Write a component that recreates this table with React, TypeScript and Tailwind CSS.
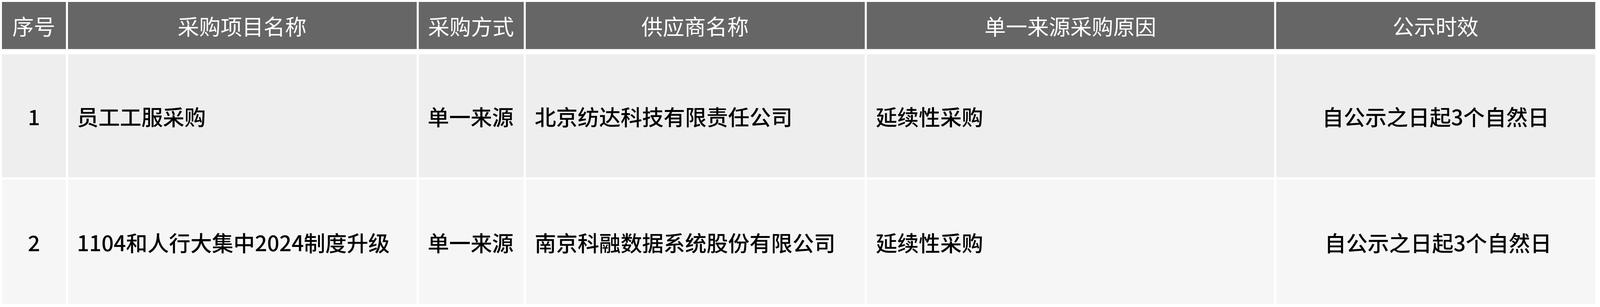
import React from "react";

const headers = ["序号", "采购项目名称", "采购方式", "供应商名称", "单一来源采购原因", "公示时效"];

const rows = [
  {
    no: "1",
    name: "员工工服采购",
    method: "单一来源",
    supplier: "北京纺达科技有限责任公司",
    reason: "延续性采购",
    period: "自公示之日起3个自然日",
    bg: "bg-[#eeeeee] border-[#f3f3f3]",
    h: "h-[316px]",
  },
  {
    no: "2",
    name: "1104和人行大集中2024制度升级",
    method: "单一来源",
    supplier: "南京科融数据系统股份有限公司",
    reason: "延续性采购",
    period: "\u00a0自公示之日起3个自然日",
    bg: "bg-[#f6f6f6] border-[#f9f9f9]",
    h: "h-[320px]",
  },
];

// column widths taken from the screenshot, as fractions so the table always fits the page
const cols = "grid grid-cols-[167fr_909fr_274fr_884fr_1062fr_832fr] gap-x-[5px]";

export default function App() {
  return (
    <div
      className="bg-white w-full h-[787px] pt-[5px] pl-[5px] pr-[12px] text-[55px] leading-none"
      style={{ fontFamily: '"Noto Sans CJK SC", "Noto Sans", sans-serif' }}
    >
      <div className={`${cols} h-[121px] mb-[13px]`}>
        {headers.map((h) => (
          <div
            key={h}
            className="flex items-center justify-center bg-[#666666] border-r border-b border-[#8a8a8a] text-white"
          >
            {h}
          </div>
        ))}
      </div>
      <div className="flex flex-col gap-[5px]">
        {rows.map((r) => (
          <div key={r.no} className={`${cols} ${r.h} font-medium text-black`}>
            <div className={`flex items-center justify-center border ${r.bg}`}>{r.no}</div>
            <div className={`flex items-center pl-[22px] border ${r.bg}`}>{r.name}</div>
            <div className={`flex items-center pl-[22px] border ${r.bg}`}>{r.method}</div>
            <div className={`flex items-center pl-[22px] border ${r.bg}`}>{r.supplier}</div>
            <div className={`flex items-center pl-[22px] border ${r.bg}`}>{r.reason}</div>
            <div className={`flex items-center justify-center border ${r.bg}`}>{r.period}</div>
          </div>
        ))}
      </div>
    </div>
  );
}
